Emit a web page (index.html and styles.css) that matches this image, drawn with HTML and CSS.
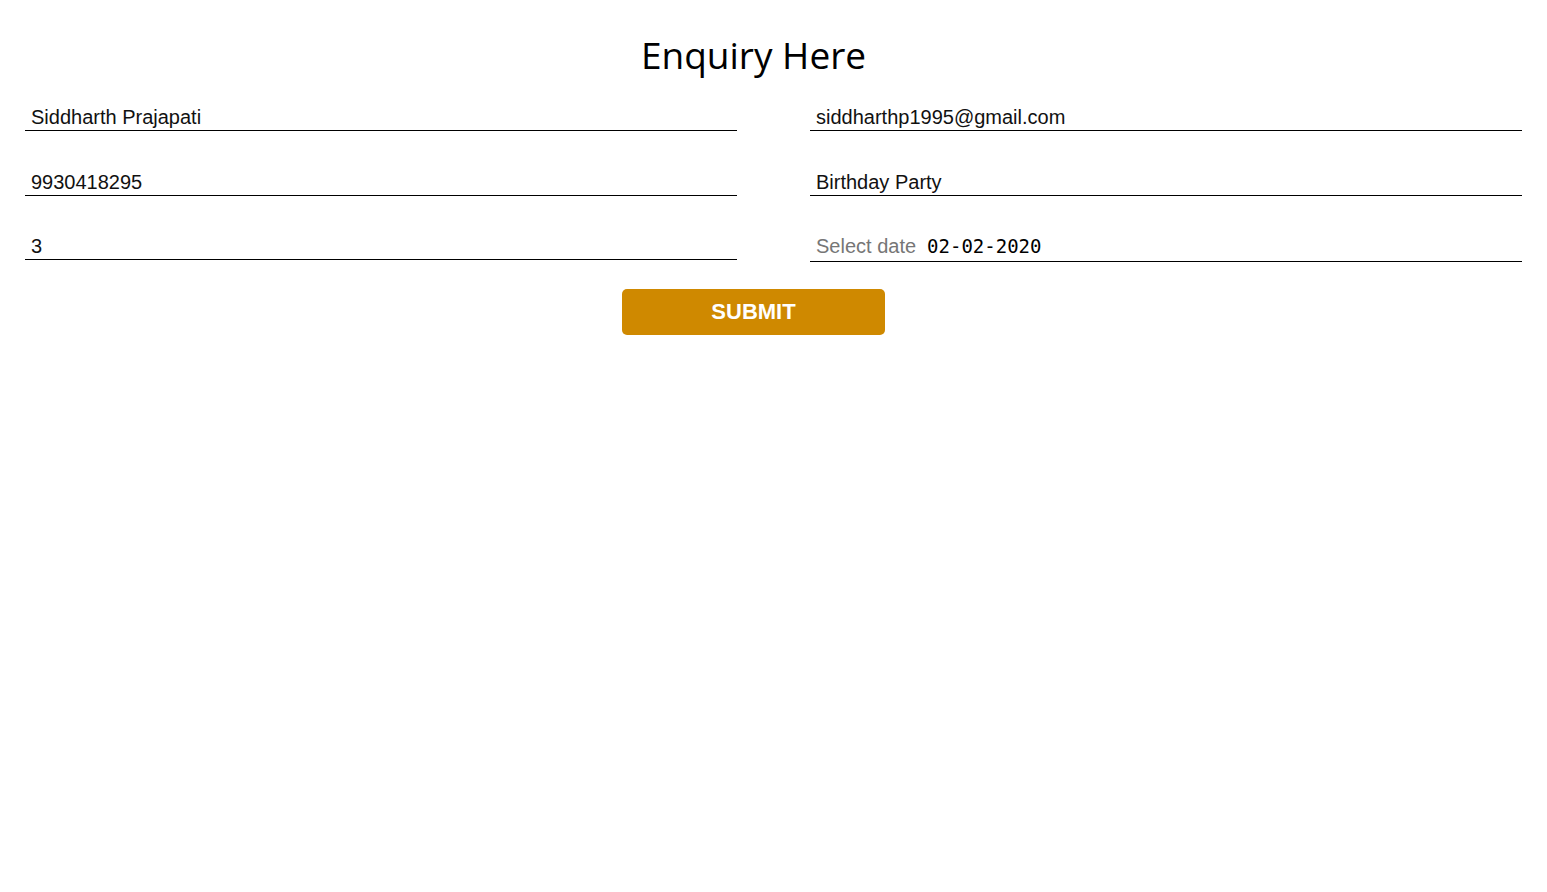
FILE: index.html
```html
<!DOCTYPE html>
<html>
<head>
<meta charset="utf-8">
<link rel="stylesheet" href="styles.css">
</head>
<body>
<div class="page">
  <h1 class="title">Enquiry Here</h1>
  <form class="form">
    <div class="row">
      <div class="field">Siddharth Prajapati</div>
      <div class="field">siddharthp1995@gmail.com</div>
    </div>
    <div class="row">
      <div class="field">9930418295</div>
      <div class="field">Birthday Party</div>
    </div>
    <div class="row">
      <div class="field">3</div>
      <div class="field field-date"><span class="label">Select date</span><span class="date">02-02-2020</span></div>
    </div>
    <div class="actions">
      <button type="button" class="submit">SUBMIT</button>
    </div>
  </form>
</div>
</body>
</html>
```

FILE: styles.css
```css
html, body {
  margin: 0;
  padding: 0;
  background: #fff;
}

.page {
  padding: 0 25px;
  font-family: "Liberation Sans", Arial, sans-serif;
  color: #111;
}

.title {
  margin: 30px 40px 0 0;
  text-align: center;
  font-family: "Open Sans", "Noto Sans", sans-serif;
  font-weight: 400;
  font-size: 37px;
  line-height: 50px;
  color: #000;
}

.form {
  margin-top: 20px;
  display: flex;
  flex-direction: column;
  gap: 33.5px;
}

.row {
  display: flex;
  gap: 73px;
  align-items: flex-start;
}

.field {
  flex: 1;
  box-sizing: border-box;
  padding: 6px 6px 1px;
  font-size: 20px;
  line-height: 23px;
  border-bottom: 1px solid #000;
  white-space: nowrap;
}

.field-date {
  padding-bottom: 3px;
  display: flex;
  align-items: baseline;
}

.label {
  color: #767676;
  margin-right: 11px;
}

.date {
  font-family: "DejaVu Sans Mono", monospace;
  font-size: 19px;
  color: #000;
}

.actions {
  margin-top: -7px;
  display: flex;
  justify-content: center;
  padding-right: 40px;
}

.submit {
  width: 263px;
  height: 46px;
  border: none;
  border-radius: 5px;
  background: #cf8900;
  color: #fff;
  font-family: "Liberation Sans", Arial, sans-serif;
  font-weight: 700;
  font-size: 22px;
  padding: 0;
  cursor: pointer;
}
```
